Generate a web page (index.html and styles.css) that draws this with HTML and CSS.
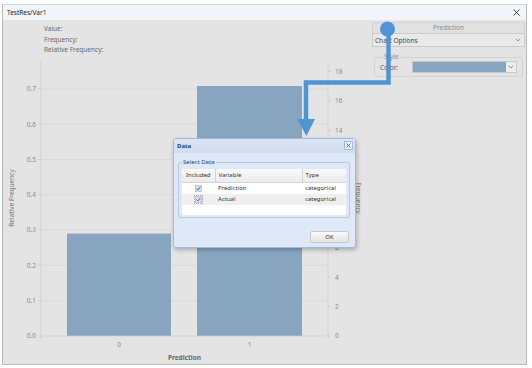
FILE: index.html
```html
<!DOCTYPE html>
<html lang="en">
<head>
    <meta charset="UTF-8">
    <title>TestRes/Var1</title>
    <link rel="stylesheet" href="styles.css">
</head>
<body>
    <div class="window">
        <div class="titlebar">
            <span class="title">TestRes/Var1</span>
            <svg class="close" width="7" height="7" viewBox="0 0 7 7"><path d="M0.5 0.5L6.5 6.5M6.5 0.5L0.5 6.5" stroke="#333" stroke-width="0.9"/></svg>
        </div>
        <div class="content">
            <div class="chart-area">
                <div class="readout">
                    <div>Value:</div>
                    <div>Frequency:</div>
                    <div>Relative Frequency:</div>
                </div>
                <!-- chart: x = page x - 3, y = page y - 56 -->
                <svg class="chart" width="369" height="307" viewBox="0 0 369 307">
                    <g class="grid">
                        <line x1="38" y1="244.7" x2="325" y2="244.7"/>
                        <line x1="38" y1="209.4" x2="325" y2="209.4"/>
                        <line x1="38" y1="174.1" x2="325" y2="174.1"/>
                        <line x1="38" y1="138.8" x2="325" y2="138.8"/>
                        <line x1="38" y1="103.5" x2="325" y2="103.5"/>
                        <line x1="38" y1="68.2" x2="325" y2="68.2"/>
                        <line x1="38" y1="32.9" x2="325" y2="32.9"/>
                    </g>
                    <rect class="bar" x="64" y="177.6" width="104" height="102.4"/>
                    <rect class="bar" x="194" y="30" width="105" height="250"/>
                    <g class="axis">
                        <line x1="38" y1="5" x2="38" y2="283"/>
                        <line x1="325" y1="5" x2="325" y2="283"/>
                        <line x1="38" y1="280" x2="325" y2="280"/>
                        <line x1="35" y1="280" x2="38" y2="280"/>
                        <line x1="35" y1="244.7" x2="38" y2="244.7"/>
                        <line x1="35" y1="209.4" x2="38" y2="209.4"/>
                        <line x1="35" y1="174.1" x2="38" y2="174.1"/>
                        <line x1="35" y1="138.8" x2="38" y2="138.8"/>
                        <line x1="35" y1="103.5" x2="38" y2="103.5"/>
                        <line x1="35" y1="68.2" x2="38" y2="68.2"/>
                        <line x1="35" y1="32.9" x2="38" y2="32.9"/>
                        <line x1="325" y1="280" x2="328" y2="280"/>
                        <line x1="325" y1="250.6" x2="328" y2="250.6"/>
                        <line x1="325" y1="221.2" x2="328" y2="221.2"/>
                        <line x1="325" y1="191.8" x2="328" y2="191.8"/>
                        <line x1="325" y1="162.4" x2="328" y2="162.4"/>
                        <line x1="325" y1="133" x2="328" y2="133"/>
                        <line x1="325" y1="103.6" x2="328" y2="103.6"/>
                        <line x1="325" y1="74.2" x2="328" y2="74.2"/>
                        <line x1="325" y1="44.8" x2="328" y2="44.8"/>
                        <line x1="325" y1="15.4" x2="328" y2="15.4"/>
                    </g>
                    <g class="ticks left">
                        <text x="33" y="282.3">0.0</text>
                        <text x="33" y="247">0.1</text>
                        <text x="33" y="211.7">0.2</text>
                        <text x="33" y="176.4">0.3</text>
                        <text x="33" y="141.1">0.4</text>
                        <text x="33" y="105.8">0.5</text>
                        <text x="33" y="70.5">0.6</text>
                        <text x="33" y="35.2">0.7</text>
                    </g>
                    <g class="ticks right">
                        <text x="332" y="282.3">0</text>
                        <text x="332" y="252.9">2</text>
                        <text x="332" y="223.5">4</text>
                        <text x="332" y="194.1">6</text>
                        <text x="332" y="164.7">8</text>
                        <text x="332" y="135.3">10</text>
                        <text x="332" y="105.9">12</text>
                        <text x="332" y="76.5">14</text>
                        <text x="332" y="47.1">16</text>
                        <text x="332" y="17.7">18</text>
                    </g>
                    <g class="ticks bottom">
                        <text x="116" y="290.5">0</text>
                        <text x="246.5" y="290.5">1</text>
                    </g>
                    <text class="axis-title" x="181.5" y="303.5">Prediction</text>
                    <text class="axis-label" transform="translate(11 142) rotate(-90)">Relative Frequency</text>
                    <text class="axis-label" transform="translate(353 142) rotate(90)">Frequency</text>
                </svg>
            </div>
            <div class="side">
                <div class="side-head">Prediction</div>
                <div class="select">
                    <span>Chart Options</span>
                    <svg width="6" height="4" viewBox="0 0 6 4"><path d="M0.8 0.8L3 3L5.2 0.8" fill="none" stroke="#888" stroke-width="0.9"/></svg>
                </div>
                <fieldset class="style-box">
                    <legend>Style</legend>
                    <div class="color-row">
                        <span class="color-label">Color:</span>
                        <div class="color-select">
                            <span class="swatch"></span>
                            <span class="chev"><svg width="6" height="4" viewBox="0 0 6 4"><path d="M0.8 0.8L3 3L5.2 0.8" fill="none" stroke="#888" stroke-width="0.9"/></svg></span>
                        </div>
                    </div>
                </fieldset>
            </div>
        </div>
    </div>

    <div class="dialog">
        <div class="dialog-head">
            Data
            <span class="dialog-close"><svg width="5" height="5" viewBox="0 0 5 5"><path d="M0.5 0.5L4.5 4.5M4.5 0.5L0.5 4.5" stroke="#3b6cb5" stroke-width="1"/></svg></span>
        </div>
        <div class="dialog-body">
            <fieldset class="select-data">
                <legend>Select Data</legend>
                <div class="grid-box">
                    <table>
                        <thead>
                            <tr><th class="col-inc">Included</th><th class="col-var">Variable</th><th class="col-type">Type</th></tr>
                        </thead>
                        <tbody>
                            <tr>
                                <td class="col-inc"><span class="check"><svg width="5" height="5" viewBox="0 0 5 5"><path d="M0.6 2.6L1.9 4L4.4 0.8" fill="none" stroke="#2f5fae" stroke-width="0.9"/></svg></span></td>
                                <td>Prediction</td>
                                <td>categorical</td>
                            </tr>
                            <tr class="alt">
                                <td class="col-inc"><span class="check focus"><svg width="5" height="5" viewBox="0 0 5 5"><path d="M0.6 2.6L1.9 4L4.4 0.8" fill="none" stroke="#2f5fae" stroke-width="0.9"/></svg></span></td>
                                <td>Actual</td>
                                <td>categorical</td>
                            </tr>
                        </tbody>
                    </table>
                </div>
            </fieldset>
            <div class="buttons">
                <button class="ok">OK</button>
            </div>
        </div>
    </div>

    <!-- annotation arrow -->
    <svg class="callout" width="532" height="368" viewBox="0 0 532 368">
        <circle cx="387.5" cy="29" r="7.5" fill="#4f94d4"/>
        <polyline points="388.5,29 388.5,82.5 306,82.5 306,121" fill="none" stroke="#4f94d4" stroke-width="4.5"/>
        <polygon points="297.5,119 315,119 306.3,136" fill="#4f94d4"/>
    </svg>
</body>
</html>
```

FILE: styles.css
```css
* {
    box-sizing: border-box;
}
body {
    margin: 0;
    width: 532px;
    height: 368px;
    overflow: hidden;
    position: relative;
    background: #fff;
    font-family: "Noto Sans", "Liberation Sans", sans-serif;
    font-size: 6.5px;
    color: #333;
}
.window {
    margin: 4px 0 0 2px;
    width: 525px;
    height: 361px;
    border: 1px solid #b9b9b9;
    border-top-color: #cfd6e0;
    display: flex;
    flex-direction: column;
}
.titlebar {
    height: 15px;
    flex: none;
    background: #f1f5fa;
    display: flex;
    align-items: center;
    justify-content: space-between;
    padding: 0 6px 0 4px;
    color: #222;
}
.close {
    display: block;
}
.content {
    flex: 1;
    display: flex;
    background: #e4e4e4;
}
.chart-area {
    width: 369px;
    flex: none;
    display: flex;
    flex-direction: column;
}
.readout {
    height: 36px;
    padding: 4px 0 0 41px;
    line-height: 10.5px;
    color: #6a6a6a;
}
.chart {
    display: block;
}
.chart .grid line {
    stroke: #d7d7d7;
    stroke-width: 0.8;
}
.chart .axis line {
    stroke: #cdcdcd;
    stroke-width: 0.8;
}
.chart .bar {
    fill: #88a5c0;
}
.chart text {
    font-family: "Noto Sans", "Liberation Sans", sans-serif;
    font-size: 6.5px;
    fill: #8a8a8a;
}
.chart .ticks.left text {
    text-anchor: end;
}
.chart .ticks.bottom text {
    text-anchor: middle;
}
.chart .axis-title {
    text-anchor: middle;
    font-weight: bold;
    fill: #666;
}
.chart .axis-label {
    text-anchor: middle;
    fill: #777;
}
.side {
    width: 153px;
    flex: none;
    padding-top: 2px;
}
.side-head {
    height: 11px;
    line-height: 10px;
    text-align: center;
    color: #8c8c8c;
    background: #e1e1e1;
    border: 1px solid #d2d2d2;
    border-bottom: none;
}
.select {
    height: 14px;
    border: 1px solid #cbcbcb;
    background: #e9e9e9;
    display: flex;
    align-items: center;
    justify-content: space-between;
    padding: 0 3px 0 2px;
    color: #444;
}
.style-box {
    margin: 6px 2px 0 2px;
    border: 1px solid #d3d3d3;
    border-radius: 3px;
    padding: 0 5px 3px 5px;
    min-width: 0;
}
.style-box legend {
    margin-left: 3px;
    padding: 0 1px;
    line-height: 8px;
    color: #8c8c8c;
}
.color-row {
    display: flex;
    align-items: center;
    height: 12px;
}
.color-label {
    width: 32px;
    color: #555;
}
.color-select {
    width: 105px;
    height: 12px;
    border: 1px solid #c8c8c8;
    background: #ececec;
    display: flex;
}
.swatch {
    flex: 1;
    background: #88a5c0;
}
.chev {
    width: 10px;
    display: flex;
    align-items: center;
    justify-content: center;
}

/* dialog over the chart */
.dialog {
    position: absolute;
    left: 173px;
    top: 138px;
    width: 183px;
    height: 110px;
    border: 1px solid #9fbbe3;
    border-radius: 3px;
    background: #dfe8f6;
    box-shadow: 1px 2px 4px rgba(0, 0, 0, 0.25);
    font-size: 6px;
}
.dialog-head {
    position: relative;
    height: 14px;
    line-height: 14px;
    padding-left: 3px;
    font-weight: bold;
    color: #15428b;
    background: linear-gradient(#dae5f4, #d0ddef);
}
.dialog-close {
    position: absolute;
    right: 2px;
    top: 2px;
    width: 9px;
    height: 9px;
    border: 1px solid #9fbbe3;
    background: #eef3fb;
    display: flex;
    align-items: center;
    justify-content: center;
}
.dialog-body {
    padding: 0 5px 0 4px;
}
.select-data {
    margin: 5px 0 0 0;
    border: 1px solid #b5c8e3;
    border-radius: 3px;
    padding: 0 3px 2px 3px;
    min-width: 0;
}
.select-data legend {
    padding: 0 1px;
    line-height: 8px;
    color: #15428b;
}
.grid-box {
    margin-top: 3px;
    height: 46px;
    background: #fff;
}
table {
    width: 100%;
    border-collapse: collapse;
    table-layout: fixed;
}
th {
    height: 13px;
    padding: 0 3px;
    font-weight: normal;
    text-align: left;
    color: #333;
    background: linear-gradient(#fafafa, #ebebeb);
    border-bottom: 1px solid #d4d4d4;
    border-left: 1px solid #d4d4d4;
}
th:first-child {
    border-left: none;
}
td {
    height: 11.5px;
    padding: 0 3px;
    color: #333;
}
.col-inc {
    width: 33px;
    text-align: center;
}
.col-type {
    width: 44px;
}
tr.alt td {
    background: #efefef;
}
.check {
    display: inline-flex;
    width: 7px;
    height: 7px;
    align-items: center;
    justify-content: center;
    background: #d9dee6;
    border: 1px solid #c3c9d2;
    vertical-align: middle;
}
.check.focus {
    outline: 1px dotted #a0a0a0;
    outline-offset: 0;
}
.buttons {
    display: flex;
    justify-content: flex-end;
    margin-top: 13px;
}
.ok {
    width: 39px;
    height: 12px;
    margin-right: 1px;
    padding: 0;
    font-family: inherit;
    font-size: 6px;
    color: #333;
    background: linear-gradient(#fafafa, #e3e3e3);
    border: 1px solid #c9c9c9;
    border-radius: 2px;
}

/* annotation arrow */
.callout {
    position: absolute;
    left: 0;
    top: 0;
    pointer-events: none;
}
```
